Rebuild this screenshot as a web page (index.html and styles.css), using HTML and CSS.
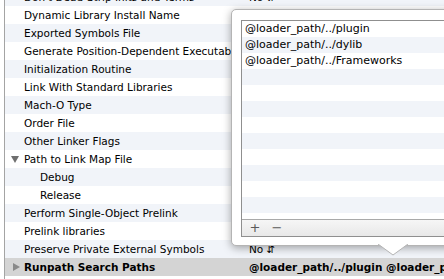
FILE: index.html
```html
<!DOCTYPE html>
<html lang="en">
<head>
    <meta charset="UTF-8">
    <meta name="viewport" content="width=device-width, initial-scale=1.0">
    <link rel="stylesheet" href="styles.css">
    <title>Build Settings</title>
</head>
<body>
    <div class="settings">
        <div class="row alt"><span class="label">Don't Dead-Strip Inits and Terms</span><span class="value">No &#8693;</span></div>
        <div class="row"><span class="label">Dynamic Library Install Name</span><span class="value"></span></div>
        <div class="row alt"><span class="label">Exported Symbols File</span><span class="value"></span></div>
        <div class="row"><span class="label">Generate Position-Dependent Executable</span><span class="value"></span></div>
        <div class="row alt"><span class="label">Initialization Routine</span><span class="value"></span></div>
        <div class="row"><span class="label">Link With Standard Libraries</span><span class="value"></span></div>
        <div class="row alt"><span class="label">Mach-O Type</span><span class="value"></span></div>
        <div class="row"><span class="label">Order File</span><span class="value"></span></div>
        <div class="row alt"><span class="label">Other Linker Flags</span><span class="value"></span></div>
        <div class="row"><span class="label"><span class="tri open"></span>Path to Link Map File</span><span class="value"></span></div>
        <div class="row alt"><span class="label sub">Debug</span><span class="value"></span></div>
        <div class="row"><span class="label sub">Release</span><span class="value"></span></div>
        <div class="row alt"><span class="label">Perform Single-Object Prelink</span><span class="value"></span></div>
        <div class="row"><span class="label">Prelink libraries</span><span class="value"></span></div>
        <div class="row alt"><span class="label">Preserve Private External Symbols</span><span class="value">No &#8693;</span></div>
        <div class="row selected"><span class="label"><span class="tri closed"></span>Runpath Search Paths</span><span class="value">@loader_path/../plugin @loader_path/../dylib @loader_path/../Frameworks</span></div>
        <div class="row"><span class="label">Separate PCH Symbols</span><span class="value"></span></div>
    </div>

    <div class="popover">
        <div class="list-box">
            <div class="list">
                <div class="item">@loader_path/../plugin</div>
                <div class="item alt">@loader_path/../dylib</div>
                <div class="item">@loader_path/../Frameworks</div>
                <div class="item alt"></div>
                <div class="item"></div>
                <div class="item alt"></div>
                <div class="item"></div>
                <div class="item alt"></div>
                <div class="item"></div>
                <div class="item alt"></div>
                <div class="item"></div>
                <div class="item alt"></div>
                <div class="item"></div>
            </div>
            <div class="toolbar">
                <span class="tool">+</span>
                <span class="tool">&minus;</span>
            </div>
        </div>
        <svg class="arrow" width="30" height="12" viewBox="0 0 30 12">
            <path d="M0 0 L15 11 L30 0 Z" fill="#ffffff"/>
            <path d="M0 0 L15 11 L30 0" fill="none" stroke="#b4b4b4" stroke-width="1"/>
        </svg>
    </div>
</body>
</html>
```

FILE: styles.css
```css
body {
    margin: 0;
    width: 444px;
    height: 279px;
    overflow: hidden;
    background-color: #ffffff;
    font-family: "DejaVu Sans", sans-serif;
    font-size: 10.5px;
    color: #000000;
    position: relative;
}

.settings {
    margin-top: -12px;
    margin-left: 4px;
    border-left: 1px solid #a4a4a4;
}

.row {
    display: flex;
    height: 18px;
    line-height: 18px;
    background-color: #ffffff;
    white-space: nowrap;
}

.row.alt {
    background-color: #f1f4f9;
}

.row.selected {
    background-color: #d4d4d4;
    font-weight: bold;
}

.label {
    flex-shrink: 0;
    width: 224px;
    padding-left: 19px;
    overflow: hidden;
    position: relative;
}

.label.sub {
    padding-left: 35px;
    width: 208px;
}

.value {
    padding-left: 1px;
    overflow: hidden;
}

.tri {
    position: absolute;
    width: 0;
    height: 0;
}

.tri.open {
    left: 6px;
    top: 6px;
    border-left: 4px solid transparent;
    border-right: 4px solid transparent;
    border-top: 7px solid #6f6f6f;
}

.tri.closed {
    left: 8px;
    top: 5px;
    border-top: 4px solid transparent;
    border-bottom: 4px solid transparent;
    border-left: 7px solid #8a8a8a;
}

.popover {
    position: absolute;
    left: 231px;
    top: 9px;
    width: 260px;
    height: 237px;
    padding: 10px 0 0 9px;
    box-sizing: border-box;
    background-color: #ffffff;
    border: 1px solid #b4b4b4;
    border-radius: 5px;
    box-shadow: 0 2px 9px rgba(0, 0, 0, 0.35);
}

.list-box {
    border: 1px solid #8f8f8f;
    border-right: none;
    background-color: #ffffff;
}

.list {
    height: 198px;
    overflow: hidden;
    border-bottom: 1px solid #a9a9a9;
    font-size: 11px;
}

.item {
    height: 16px;
    line-height: 16px;
    padding-left: 3px;
    white-space: nowrap;
}

.item.alt {
    background-color: #f1f4f9;
}

.toolbar {
    height: 16px;
    display: flex;
    align-items: center;
    gap: 8px;
    padding-left: 6px;
    background: linear-gradient(#f6f6f6, #e8e8e8);
    font-size: 13px;
    color: #5a5a5a;
}

.tool {
    width: 14px;
    text-align: center;
    line-height: 16px;
}

.arrow {
    position: absolute;
    left: 146px;
    bottom: -11px;
}
```
